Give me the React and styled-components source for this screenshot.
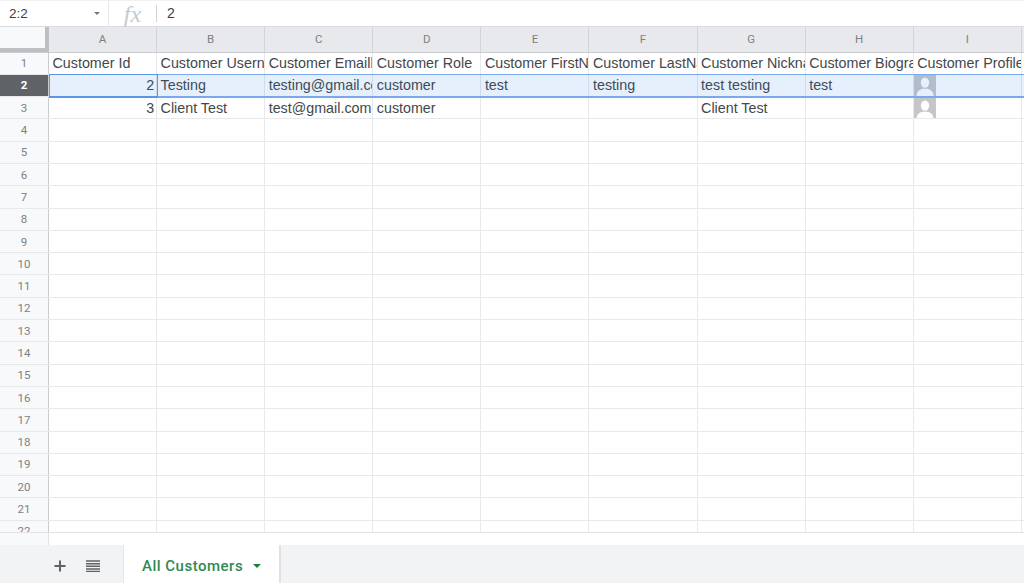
import React from 'react';
import styled, { createGlobalStyle } from 'styled-components';

const Global = createGlobalStyle`
  html, body { margin: 0; padding: 0; height: 100%; background: #fff; overflow: hidden; }
  #root { height: 100%; }
`;

const COL_W = 108.1;
const ROW_H = 22.3;
const HEAD_W = 49;

const Page = styled.div`
  width: 1024px;
  height: 583px;
  display: flex;
  flex-direction: column;
  font-family: "Liberation Sans", Arial, sans-serif;
  color: #3c4043;
  overflow: hidden;
`;

const FormulaBar = styled.div`
  height: 27px;
  flex: none;
  display: flex;
  align-items: center;
  box-sizing: border-box;
  border-top: 1px solid #f1f1f1;
  border-bottom: 1px solid #dadce0;
`;

const NameBox = styled.div`
  width: 109px;
  height: 100%;
  flex: none;
  display: flex;
  align-items: center;
  justify-content: space-between;
  box-sizing: border-box;
  padding: 0 8px 0 9px;
  border-right: 1px solid #e8e8e8;
  font-size: 13.5px;
`;

const Caret = styled.span`
  width: 0;
  height: 0;
  border-left: ${p => p.$size}px solid transparent;
  border-right: ${p => p.$size}px solid transparent;
  border-top: ${p => p.$size}px solid ${p => p.$color};
`;

const Fx = styled.div`
  width: 47px;
  flex: none;
  text-align: center;
  font-family: "Liberation Serif", serif;
  font-style: italic;
  font-size: 24px;
  line-height: 24px;
  color: #c6c9cb;
`;

const Divider = styled.div`
  width: 1px;
  height: 17px;
  flex: none;
  background: #d0d3d6;
`;

const FormulaValue = styled.div`
  padding: 0 0 1px 10px;
  font-size: 14px;
`;

const Sheet = styled.div`
  height: 506px;
  flex: none;
  overflow: hidden;
  position: relative;
  border-bottom: 1px solid #e2e3e5;
  box-sizing: border-box;
`;

const HeaderRow = styled.div`
  display: flex;
  height: 25.5px;
  box-sizing: border-box;
  background: #e8e9ec;
  border-bottom: 1px solid #c9cbce;
`;

const Corner = styled.div`
  width: ${HEAD_W}px;
  flex: none;
  box-sizing: border-box;
  background: #f8f9fa;
  border-right: 4px solid #bdbfc2;
  border-bottom: 4px solid #bdbfc2;
`;

const ColLabel = styled.div`
  width: ${COL_W}px;
  flex: none;
  box-sizing: border-box;
  display: flex;
  align-items: center;
  justify-content: center;
  border-right: 1px solid #d2d4d7;
  font-family: Roboto, sans-serif;
  font-size: 11.5px;
  color: #7d8185;
`;

const Row = styled.div`
  display: flex;
  height: ${ROW_H}px;
  box-sizing: border-box;
  border-bottom: 1px solid #e8e9eb;
`;

const RowLabel = styled.div`
  width: ${HEAD_W}px;
  flex: none;
  box-sizing: border-box;
  display: flex;
  align-items: center;
  justify-content: center;
  border-right: 1px solid #c9cbce;
  font-family: Roboto, sans-serif;
  font-size: 11.5px;
  color: ${p => (p.$active ? '#fff' : '#7d8185')};
  font-weight: ${p => (p.$active ? 700 : 400)};
  background: ${p => (p.$active ? '#5f6368' : '#f8f9fa')};
`;

const Cell = styled.div`
  width: ${COL_W}px;
  flex: none;
  box-sizing: border-box;
  padding: 0 ${p => (p.$num ? 2 : 0)}px 0 3.5px;
  display: flex;
  align-items: center;
  justify-content: ${p => (p.$num ? 'flex-end' : 'flex-start')};
  overflow: hidden;
  white-space: nowrap;
  border-right: 1px solid #e8e9eb;
  font-size: 14.3px;
  color: #43474a;
`;

const SelectedBand = styled.div`
  position: absolute;
  left: ${HEAD_W}px;
  right: 0;
  top: 47px;
  height: 24px;
  box-sizing: border-box;
  background: rgba(26, 115, 232, 0.11);
  border-top: 1.5px solid #79a9ea;
  border-bottom: 2px solid #79a9ea;
  pointer-events: none;
`;

const ActiveCell = styled.div`
  position: absolute;
  left: ${HEAD_W}px;
  top: 47px;
  width: ${COL_W + 0.5}px;
  height: 24px;
  box-sizing: border-box;
  border: 1.5px solid #5b95e6;
  border-bottom-width: 2px;
  pointer-events: none;
`;

const ScrollGap = styled.div`
  height: 12px;
  flex: none;
  display: flex;
`;

const ScrollStub = styled.div`
  width: ${HEAD_W}px;
  box-sizing: border-box;
  background: #f8f9fa;
  border-right: 1px solid #e2e3e5;
`;

const TabBar = styled.div`
  flex: 1;
  display: flex;
  background: #f1f3f4;
`;

const TabTools = styled.div`
  width: 123px;
  flex: none;
  box-sizing: border-box;
  display: flex;
  align-items: center;
  gap: 20px;
  padding: 3px 0 0 54px;
`;

const Tab = styled.div`
  width: 158px;
  flex: none;
  display: flex;
  align-items: center;
  gap: 10px;
  box-sizing: border-box;
  padding: 4px 0 0 18px;
  background: #fff;
  border-left: 1px solid #e4e6e8;
  border-right: 2px solid #dfe1e4;
  color: #2f8a52;
  font-family: Roboto, sans-serif;
  font-weight: 500;
  font-size: 15px;
  letter-spacing: 0.5px;
`;

const columns = ['A', 'B', 'C', 'D', 'E', 'F', 'G', 'H', 'I', 'J'];

const rows = {
  1: ['Customer Id', 'Customer Username', 'Customer Emaill', 'Customer Role', 'Customer FirstName', 'Customer LastName', 'Customer Nickname', 'Customer Biography', 'Customer Profile'],
  2: [2, 'Testing', 'testing@gmail.com', 'customer', 'test', 'testing', 'test testing', 'test', 'avatar'],
  3: [3, 'Client Test', 'test@gmail.com', 'customer', '', '', 'Client Test', '', 'avatar'],
};

function Avatar() {
  return (
    <svg width="22" height="22" viewBox="0 0 22 22" style={{ display: 'block', flex: 'none', marginLeft: '-3.5px' }}>
      <rect width="22" height="22" fill="#c4c6c9" />
      <ellipse cx="11" cy="8.6" rx="4.2" ry="5.2" fill="#fff" />
      <path d="M2.5 22c0.2-4.6 2.8-6.2 6-7.2h5c3.2 1 5.8 2.6 6 7.2z" fill="#fff" />
    </svg>
  );
}

function Plus() {
  return (
    <svg width="12" height="12" viewBox="0 0 12 12" style={{ flex: 'none' }}>
      <path d="M6 0.5v11M0.5 6h11" stroke="#5f6368" strokeWidth="2" />
    </svg>
  );
}

function AllSheets() {
  return (
    <svg width="14" height="12" viewBox="0 0 14 12" style={{ flex: 'none' }}>
      <path d="M0 1h14M0 3.7h14M0 6.3h14M0 9h14M0 11.4h14" stroke="#5f6368" strokeWidth="1.5" />
    </svg>
  );
}

export default function App() {
  const rowNums = Array.from({ length: 22 }, (_, i) => i + 1);

  return (
    <Page>
      <Global />
      <FormulaBar>
        <NameBox>
          2:2
          <Caret $size={3} $color="#777" />
        </NameBox>
        <Fx>fx</Fx>
        <Divider />
        <FormulaValue>2</FormulaValue>
      </FormulaBar>
      <Sheet>
        <HeaderRow>
          <Corner />
          {columns.map(c => (
            <ColLabel key={c}>{c === 'J' ? '' : c}</ColLabel>
          ))}
        </HeaderRow>
        {rowNums.map(n => (
          <Row key={n}>
            <RowLabel $active={n === 2}>{n}</RowLabel>
            {columns.map((c, i) => {
              const value = rows[n] ? rows[n][i] : '';
              return (
                <Cell key={c} $num={typeof value === 'number'}>
                  {value === 'avatar' ? <Avatar /> : value}
                </Cell>
              );
            })}
          </Row>
        ))}
        <SelectedBand />
        <ActiveCell />
      </Sheet>
      <ScrollGap>
        <ScrollStub />
      </ScrollGap>
      <TabBar>
        <TabTools>
          <Plus />
          <AllSheets />
        </TabTools>
        <Tab>
          All Customers
          <Caret $size={4} $color="#188038" />
        </Tab>
      </TabBar>
    </Page>
  );
}
